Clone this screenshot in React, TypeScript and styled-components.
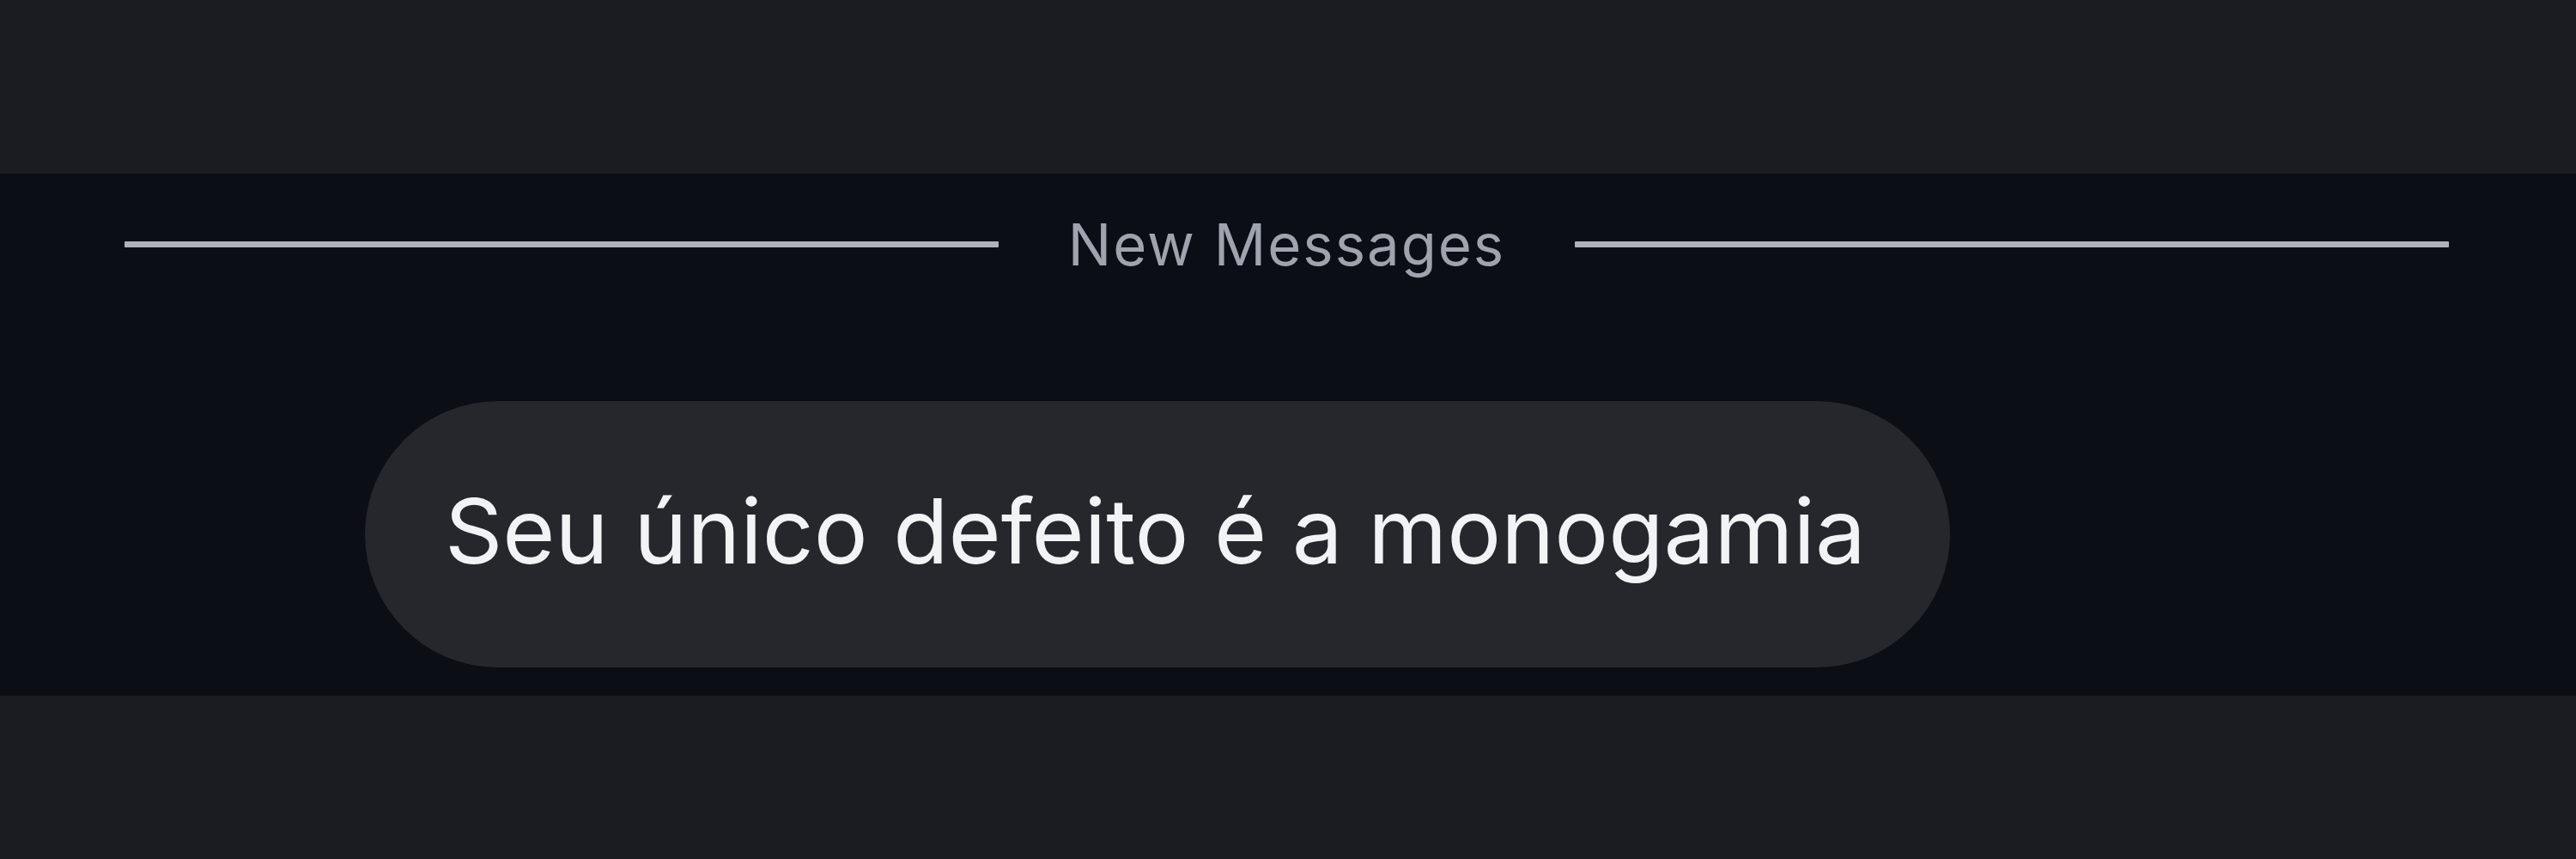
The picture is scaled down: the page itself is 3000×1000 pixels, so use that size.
import React from "react";
import styled, { createGlobalStyle } from "styled-components";

const Global = createGlobalStyle`
  html, body { margin: 0; padding: 0; background: #1b1c21; }
  body { font-family: Inter, "Noto Sans", "Liberation Sans", sans-serif; }
`;

const Page = styled.div`
  width: 3000px;
  height: 1000px;
  display: flex;
  flex-direction: column;
`;

const Band = styled.div<{ $h: number }>`
  height: ${(p) => p.$h}px;
  background: #1b1c21;
  flex: none;
`;

const Chat = styled.section`
  height: 608px;
  flex: none;
  background: #0b0e15;
  display: flex;
  flex-direction: column;
`;

const Divider = styled.div`
  display: flex;
  align-items: center;
  gap: 81px;
  padding: 0 148px 0 145px;
  margin-top: 42px;
  height: 80px;
`;

const Rule = styled.div`
  flex: 1;
  height: 7px;
  background: #aeb2bb;
  border-radius: 1px;
`;

const DividerLabel = styled.span`
  font-size: 67px;
  color: #9ea3ad;
  letter-spacing: 2px;
  line-height: 1;
  white-space: nowrap;
`;

const MessageRow = styled.div`
  display: flex;
  padding-left: 425px;
  margin-top: 143px;
`;

const Bubble = styled.div`
  height: 310px;
  box-sizing: border-box;
  border-radius: 155px;
  background: #25272d;
  display: flex;
  align-items: center;
  padding: 0 98px 10px 93px;
  color: #f2f3f5;
  font-size: 105px;
  line-height: 1;
  white-space: nowrap;
`;

export default function App() {
  return (
    <>
      <Global />
      <Page>
        <Band $h={202} />
        <Chat>
          <Divider>
            <Rule />
            <DividerLabel>New Messages</DividerLabel>
            <Rule />
          </Divider>
          <MessageRow>
            <Bubble>Seu único defeito é a monogamia</Bubble>
          </MessageRow>
        </Chat>
        <Band $h={190} />
      </Page>
    </>
  );
}
